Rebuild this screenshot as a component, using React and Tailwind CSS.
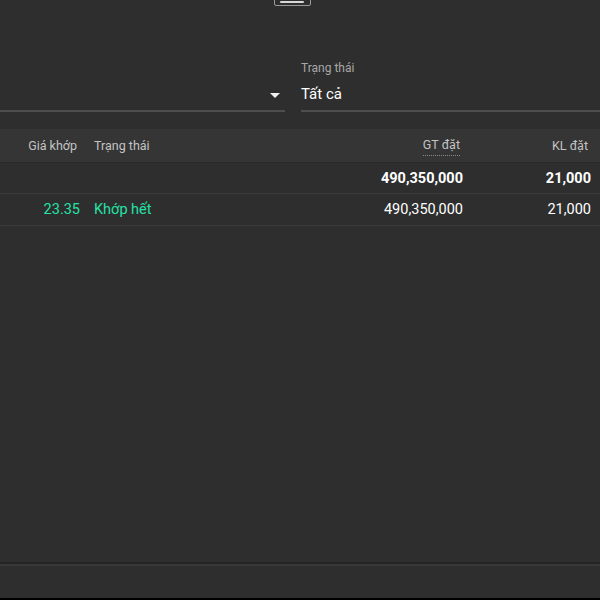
export default function App() {
  const font = { fontFamily: 'Roboto, "Noto Sans", sans-serif' }
  return (
    <div className="w-[600px] h-[600px] bg-black flex flex-col overflow-hidden" style={font}>
      <div className="flex-1 bg-[#2e2e2e] flex flex-col">
        {/* top handle */}
        <div className="flex justify-center h-[8px] pr-[16px]">
          <div className="w-[37px] h-[8px] -mt-[2px] rounded-b-[2px] border border-[#9a9a9a] flex items-center justify-center">
            <div className="w-[24px] h-[2px] bg-[#d8d8d8] rounded-full" />
          </div>
        </div>

        {/* filters */}
        <div className="flex gap-[16px] mt-[50px]">
          <div className="w-[285px] flex flex-col">
            <div className="h-[20px]" />
            <div className="h-[32px] flex items-center justify-end pr-[4px]">
              <svg width="12" height="7" viewBox="0 0 12 7" className="mt-[2px]">
                <path d="M1 1h10L6 6z" fill="#f2f2f2" />
              </svg>
            </div>
            <div className="h-[2px] bg-[#4e4e4e]" />
          </div>
          <div className="flex-1 flex flex-col">
            <div className="h-[20px] text-[12px] leading-[20px] text-[#a8a8a8]">Trạng thái</div>
            <div className="h-[32px] flex items-center text-[15px] text-white">Tất cả</div>
            <div className="h-[2px] bg-[#4e4e4e]" />
          </div>
        </div>

        {/* table */}
        <div className="mt-[17px]">
          <div className="grid grid-cols-[86px_1fr_128px] h-[34px] bg-[#353535] items-center text-[12.5px] text-[#c4c4c4] border-b border-[#2a2a2a] pt-[2px]">
            <div className="text-right pr-[9px]">Giá khớp</div>
            <div className="flex justify-between pl-[8px] pr-[12px]">
              <span>Trạng thái</span>
              <span className="border-b border-dotted border-[#8a8a8a] leading-[16px]">GT đặt</span>
            </div>
            <div className="text-right pr-[12px]">KL đặt</div>
          </div>
          <div className="grid grid-cols-[86px_1fr_128px] h-[31px] items-center text-[14.5px] text-white font-bold border-b border-[#3a3a3a] pt-[2px]">
            <div />
            <div className="text-right pr-[9px]">490,350,000</div>
            <div className="text-right pr-[9px]">21,000</div>
          </div>
          <div className="grid grid-cols-[86px_1fr_128px] h-[32px] items-center text-[14.5px] text-white border-b border-[#3a3a3a] pt-[1px]">
            <div className="text-right pr-[6px] text-[#24e2a6]">23.35</div>
            <div className="flex justify-between pl-[8px]">
              <span className="text-[#24e2a6]">Khớp hết</span>
              <span className="pr-[9px]">490,350,000</span>
            </div>
            <div className="text-right pr-[9px]">21,000</div>
          </div>
        </div>

        <div className="flex-1" />
        <div className="h-[2px] bg-[#242424]" />
        <div className="h-[2px] bg-[#383838]" />
        <div className="h-[32px]" />
      </div>
      <div className="h-[2px] bg-black" />
    </div>
  )
}
